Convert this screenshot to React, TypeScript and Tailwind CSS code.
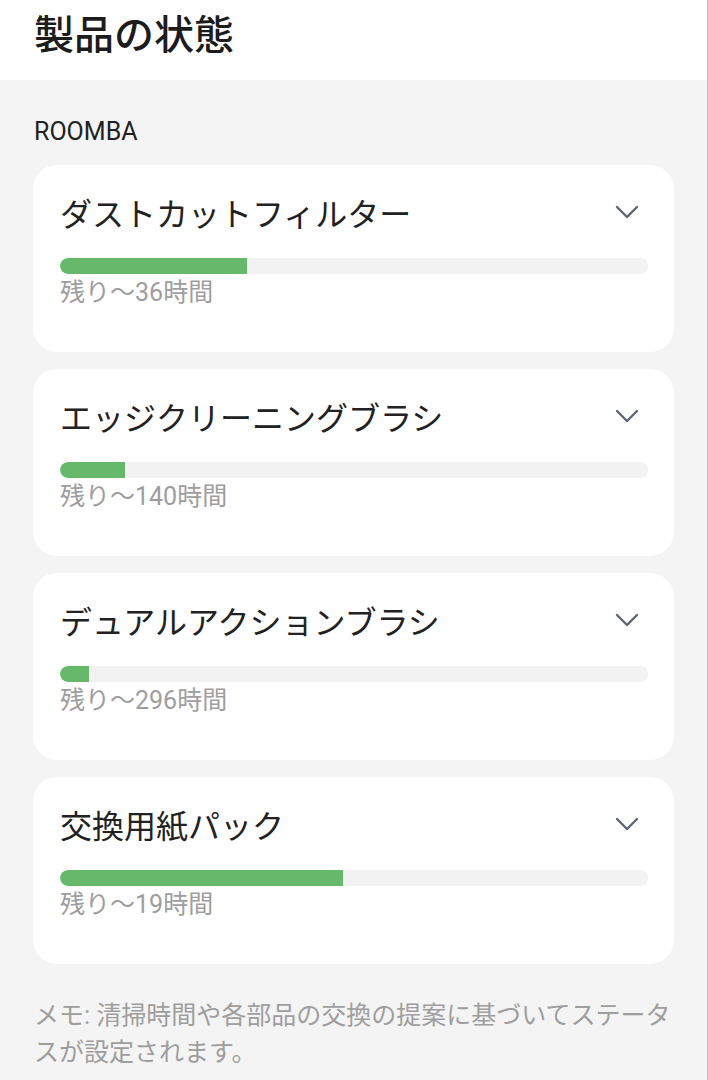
import React from 'react';

interface Part {
  id: string;
  name: string;
  remaining: number;
  percent: number;
}

const parts: Part[] = [
  { id: 'filter', name: 'ダストカットフィルター', remaining: 36, percent: 31.8 },
  { id: 'edge', name: 'エッジクリーニングブラシ', remaining: 140, percent: 11.05 },
  { id: 'dual', name: 'デュアルアクションブラシ', remaining: 296, percent: 4.9 },
  { id: 'bag', name: '交換用紙パック', remaining: 19, percent: 48.1 },
];

function Chevron() {
  return (
    <svg width="24" height="14" viewBox="0 0 24 14" fill="none" className="mt-[10px] mr-[9px]">
      <polyline points="2,2 12,12 22,2" stroke="#5c6675" strokeWidth="2.4" strokeLinecap="round" strokeLinejoin="round" />
    </svg>
  );
}

function PartCard({ part }: { part: Part }) {
  return (
    <div className="bg-white rounded-3xl pt-[30px] pb-[43px] pl-[27px] pr-[26px]">
      <div className="flex justify-between items-start">
        <h3 className="text-[32px] leading-[40px] text-[#222222]">{part.name}</h3>
        <Chevron />
      </div>
      <div className="mt-[23px] h-4 rounded-full bg-[#f2f2f2] overflow-hidden">
        <div className="h-full bg-[#66b86a] rounded-l-full" style={{ width: `${part.percent}%` }} />
      </div>
      <p className="mt-[3px] text-[25px] leading-[32px] text-[#9e9e9e]">残り～{part.remaining}時間</p>
    </div>
  );
}

export default function App() {
  return (
    <div className="min-h-screen bg-[#f4f4f4] border-r border-[#c2c2c2] font-['Roboto','Noto_Sans_CJK_JP',sans-serif]">
      <header className="h-20 bg-white pt-[12px] pl-[34px]">
        <h1 className="text-[40px] leading-[48px] font-medium text-[#1c1c1c]">製品の状態</h1>
      </header>

      <main className="px-[33px] pt-[36px]">
        <h2 className="text-[25px] leading-[32px] text-[#222222] pl-px">ROOMBA</h2>
        <div className="mt-[17px] flex flex-col gap-[17px]">
          {parts.map((part) => (
            <PartCard key={part.id} part={part} />
          ))}
        </div>
        <p className="mt-[33px] pl-px text-[25px] leading-[37px] text-[#9e9e9e]">
          メモ: 清掃時間や各部品の交換の提案に基づいてステータスが設定されます。
        </p>
      </main>
    </div>
  );
}
